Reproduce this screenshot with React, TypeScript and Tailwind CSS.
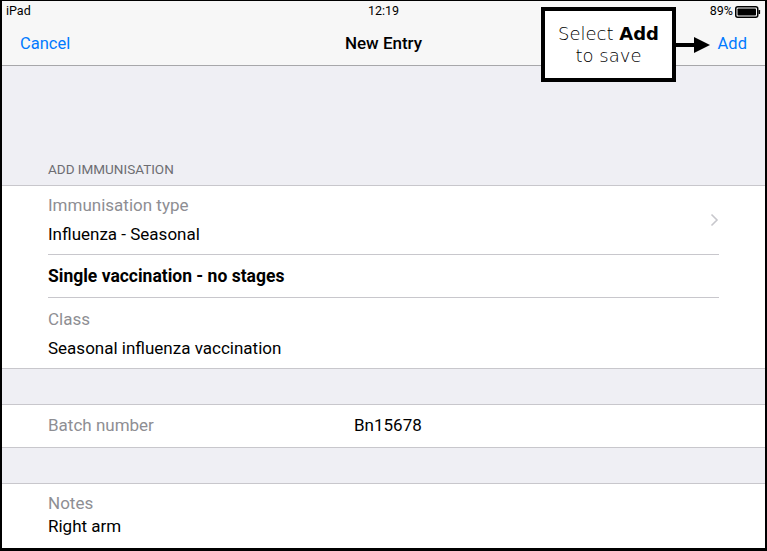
import React from "react";

const font = { fontFamily: "Roboto, 'Liberation Sans', sans-serif" };

const Battery: React.FC = () => (
  <svg width="26" height="12" viewBox="0 0 26 12">
    <rect x="0.75" y="0.75" width="22" height="10.5" rx="2" fill="none" stroke="#000" strokeWidth="1.5" />
    <rect x="2.5" y="2.5" width="18.5" height="7" rx="0.8" fill="#000" />
    <rect x="23.5" y="4" width="1.6" height="4" rx="0.6" fill="#000" />
  </svg>
);

const Chevron: React.FC = () => (
  <svg width="9" height="14" viewBox="0 0 9 14">
    <path d="M1.5 1.5 L7 7 L1.5 12.5" fill="none" stroke="#c7c7cc" strokeWidth="1.6" />
  </svg>
);

export default function App() {
  return (
    <div
      className="relative w-[767px] h-[551px] overflow-hidden border-black border-x-2 border-t border-b-[3px] bg-[#efeff4] flex flex-col"
      style={font}
    >
      {/* status + nav bar */}
      <div className="bg-[#f7f7f7] border-b border-[#a7a7aa]">
        <div className="h-[21px] flex items-center justify-between px-[4px] text-[12.5px] text-black">
          <span className="w-[120px]">iPad</span>
          <span>12:19</span>
          <div className="w-[120px] flex items-center justify-end gap-[2px]">
            <span>89%</span>
            <Battery />
          </div>
        </div>
        <div className="h-[43px] flex items-center justify-between px-[18px] text-[16.5px] pt-[1px]">
          <span className="text-[#007aff] w-[80px]">Cancel</span>
          <span className="font-medium text-black text-[17px]">New Entry</span>
          <span className="text-[#007aff] w-[80px] text-right">Add</span>
        </div>
      </div>

      {/* section header */}
      <div className="h-[119px] flex items-end px-[46px] pb-[6px]">
        <span className="text-[13.5px] text-[#6d6d72] uppercase">Add Immunisation</span>
      </div>

      {/* group 1 */}
      <div className="bg-white border-y border-[#c8c7cc] text-[17px]">
        <div className="mx-[46px] border-b border-[#c8c7cc] h-[69px] flex items-center justify-between">
          <div className="flex flex-col gap-[8px]">
            <span className="text-[#8e8e93] leading-[21px]">Immunisation type</span>
            <span className="text-black leading-[21px]">Influenza - Seasonal</span>
          </div>
          <div className="mb-[1px]">
            <Chevron />
          </div>
        </div>
        <div className="mx-[46px] border-b border-[#c8c7cc] h-[43px] flex items-center">
          <span className="font-bold text-black text-[17.5px]">Single vaccination - no stages</span>
        </div>
        <div className="px-[46px] h-[70px] flex flex-col justify-center gap-[8px] pt-[1px]">
          <span className="text-[#8e8e93] leading-[21px]">Class</span>
          <span className="text-black leading-[21px]">Seasonal influenza vaccination</span>
        </div>
      </div>

      <div className="h-[35px]" />

      {/* batch */}
      <div className="bg-white border-y border-[#c8c7cc] h-[44px] flex items-center px-[46px] text-[17px]">
        <span className="w-[306px] text-[#8e8e93]">Batch number</span>
        <span className="text-black">Bn15678</span>
      </div>

      <div className="h-[35px]" />

      {/* notes */}
      <div className="bg-white border-t border-[#c8c7cc] flex-1 px-[46px] pt-[9px] flex flex-col gap-[2px] text-[17px]">
        <span className="text-[#8e8e93] leading-[21px]">Notes</span>
        <span className="text-black leading-[21px]">Right arm</span>
      </div>

      {/* callout */}
      <div className="absolute left-[539px] top-[6px] flex items-center">
        <div
          className="w-[135px] h-[75px] border-[4px] border-black bg-white flex flex-col items-center justify-center text-[18px] leading-[22px] text-black"
          style={{ fontFamily: "'DejaVu Sans', Lato, sans-serif", fontWeight: 200 }}
        >
          <span>
            Select <b className="font-bold">Add</b>
          </span>
          <span>to save</span>
        </div>
        <div className="w-[18px] h-[4px] bg-black" />
        <div className="w-0 h-0 border-y-[8px] border-y-transparent border-l-[16px] border-l-black" />
      </div>
    </div>
  );
}
